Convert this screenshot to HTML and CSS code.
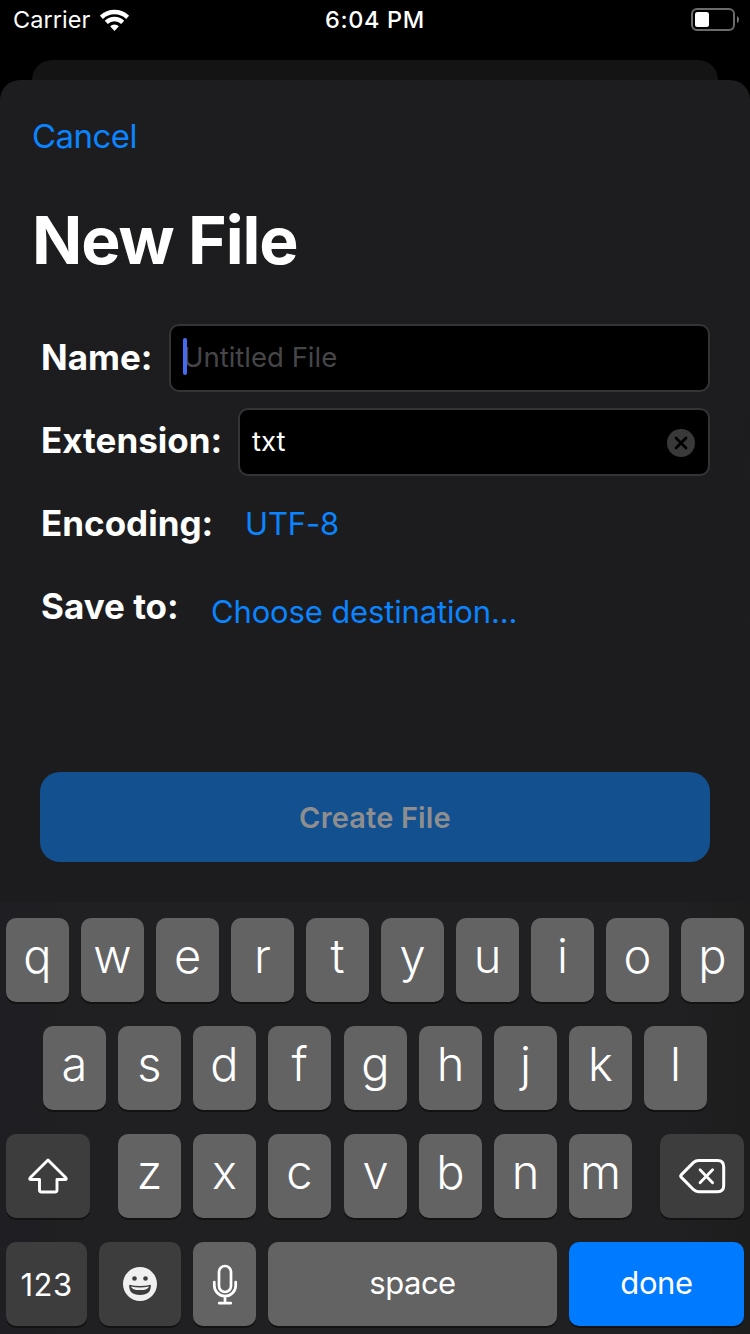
FILE: index.html
```html
<!DOCTYPE html>
<html lang="en">
<head>
<meta charset="utf-8">
<title>New File</title>
<link rel="stylesheet" href="styles.css">
</head>
<body>
<header class="status">
  <div class="status-left">
    <span class="carrier">Carrier</span>
    <svg class="wifi" width="30" height="22" viewBox="0 0 30 22">
      <g fill="none" stroke="#fff" stroke-width="4.400">
        <path d="M1.400 8.300a19 19 0 0 1 26.200 0"/>
        <path d="M6.300 13.300a11.900 11.900 0 0 1 16.400 0"/>
      </g>
      <path d="M10.100 17.300a6.300 6.300 0 0 1 8.800 0L14.500 22z" fill="#fff"/>
    </svg>
  </div>
  <span class="time">6:04 PM</span>
  <div class="status-right">
    <svg width="50" height="24" viewBox="0 0 50 24">
      <rect x="2" y="2" width="42" height="21" rx="5" fill="none" stroke="#6b6b6b" stroke-width="2"/>
      <rect x="5" y="5" width="14" height="15" rx="2.500" fill="#fff"/>
      <path d="M47 9q2 1 2 3.500t-2 3.500z" fill="#7a7a7a"/>
    </svg>
  </div>
</header>
<div class="sheet-behind"></div>
<main class="sheet">
  <a class="cancel">Cancel</a>
  <h1 class="title">New File</h1>
  <form class="form">
    <div class="row row-name">
      <label class="label name">Name:</label>
      <div class="field"><span class="caret"></span><span class="placeholder">Untitled File</span></div>
    </div>
    <div class="row row-ext">
      <label class="label ext">Extension:</label>
      <div class="field">
        <span class="value">txt</span>
        <svg class="clear" width="28" height="28" viewBox="0 0 28 28">
          <circle cx="14" cy="14" r="14" fill="#39393a"/>
          <path d="M9 9l10 10M19 9l-10 10" stroke="#000" stroke-width="2.800" stroke-linecap="round"/>
        </svg>
      </div>
    </div>
    <div class="row row-link">
      <label class="label enc">Encoding:</label>
      <a class="link utf">UTF-8</a>
    </div>
    <div class="row row-link row-save">
      <label class="label save">Save to:</label>
      <a class="link dest">Choose destination...</a>
    </div>
  </form>
  <div class="create">Create File</div>
</main>
<section class="keyboard">
  <div class="keys">
    <span class="key">q</span><span class="key">w</span><span class="key">e</span><span class="key">r</span><span class="key">t</span><span class="key">y</span><span class="key">u</span><span class="key">i</span><span class="key">o</span><span class="key">p</span>
  </div>
  <div class="keys keys-home">
    <span class="key">a</span><span class="key">s</span><span class="key">d</span><span class="key">f</span><span class="key nudge">g</span><span class="key">h</span><span class="key">j</span><span class="key">k</span><span class="key">l</span>
  </div>
  <div class="keys">
    <span class="key dark shift">
      <svg width="40" height="36" viewBox="0 0 40 36" fill="none" stroke="#fff" stroke-width="2.900" stroke-linejoin="round">
        <path d="M20 2 2.200 19.800q-1.200 1.700.8 1.700H11.500V32q0 2 2 2H27q2 0 2-2V21.500H37q2 0 .8-1.700z"/>
      </svg>
    </span>
    <span class="key">z</span><span class="key">x</span><span class="key">c</span><span class="key nudge">v</span><span class="key">b</span><span class="key">n</span><span class="key">m</span>
    <span class="key dark delete">
      <svg width="48" height="36" viewBox="0 0 48 36" fill="none" stroke="#fff" stroke-width="3" stroke-linecap="round" stroke-linejoin="round">
        <path d="M3.200 16.900 15.600 4.400Q17.800 2.400 20.500 2.400H39.500Q45.700 2.400 45.700 8.700V27.500Q45.700 33.700 39.500 33.700H20.500Q17.800 33.700 15.600 31.700L3.200 19.100Q2.200 18 3.200 16.900z"/>
        <path d="M22 11.700 34.600 24.700M34.600 11.700 22 24.700" stroke-width="2.800"/>
      </svg>
    </span>
  </div>
  <div class="keys">
    <span class="key dark numbers">123</span>
    <span class="key dark emoji">
      <svg width="34" height="34" viewBox="0 0 34 34">
        <circle cx="17" cy="17" r="17" fill="#f0f0f0"/>
        <g fill="#3d3d3d">
          <circle cx="11.500" cy="11.500" r="2.300"/>
          <circle cx="22.500" cy="11.500" r="2.300"/>
          <path d="M6.200 17.800Q17 20.200 27.800 17.800Q28.500 28 17 28Q5.500 28 6.200 17.800z"/>
        </g>
        <path d="M8 19.400Q17 21.400 26 19.400Q25.200 23.100 17 23.100Q8.800 23.100 8 19.400z" fill="#f0f0f0"/>
      </svg>
    </span>
    <span class="key mic">
      <svg width="26" height="42" viewBox="0 0 26 42" fill="none" stroke="#fff" stroke-width="2.700" stroke-linecap="round">
        <rect x="7" y="3" width="12" height="26" rx="6"/>
        <path d="M2.300 19V22.500a10.700 10.700 0 0 0 21.400 0V19M13 33.200V40M7.200 40.200H18.800"/>
      </svg>
    </span>
    <span class="key space">space</span>
    <span class="key done">done</span>
  </div>
</section>
</body>
</html>
```
FILE: styles.css
```css
* { box-sizing: border-box; }
body {
  margin: 0;
  width: 750px;
  height: 1334px;
  overflow: hidden;
  background: #000;
  color: #fff;
  font-family: Inter, "Liberation Sans", sans-serif;
  display: flex;
  flex-direction: column;
  white-space: nowrap;
}
.status {
  height: 60px;
  flex: none;
  display: grid;
  grid-template-columns: 1fr auto 1fr;
  line-height: 40px;
  font-size: 23.500px;
}
.status-left { display: flex; padding-left: 13px; gap: 10px; }
.carrier { letter-spacing: .05px; }
.wifi { margin-top: 9px; }
.time { font-weight: 500; letter-spacing: .65px; }
.status-right { display: flex; justify-content: flex-end; padding: 7px 10px 0 0; }
.sheet-behind {
  flex: none;
  height: 20px;
  margin: 0 32px;
  border-radius: 20px 20px 0 0;
  background: #141414;
}
.sheet {
  flex: none;
  height: 822px;
  padding: 36px 40px 0;
  background: linear-gradient(#1d1d1f, #1c1c1e);
  border-radius: 20px 20px 0 0;
  display: flex;
  flex-direction: column;
}
.cancel {
  margin-left: -8px;
  font-size: 33px;
  letter-spacing: -.55px;
  line-height: 40px;
  color: #0a84ff;
}
.title {
  margin: 44px 0 0 -8px;
  font-size: 66px;
  letter-spacing: -1.100px;
  line-height: 80px;
  font-weight: 700;
}
.form { margin-top: 44px; height: 448px; }
.row { display: flex; align-items: center; height: 68px; }
.row-name .label { margin-top: -2px; }
.row-ext { margin-top: 16px; }
.row-ext .label { margin-top: -4px; }
.row-link { margin-top: 13px; }
.row-save { margin-top: 15px; }
.row-save .label { margin-top: -1px; }
.label { flex: none; font-size: 35px; font-weight: 700; padding-left: 1px; }
.name { width: 129px; }
.ext { width: 198px; }
.enc { width: 205px; }
.save { width: 171px; }
.field {
  flex: 1;
  height: 68px;
  border: 2px solid #343436;
  border-radius: 10px;
  background: #000;
  display: flex;
  align-items: center;
  padding: 0 13px 0 12px;
  font-size: 27.500px;
}
.caret { width: 4px; height: 37px; border-radius: 2px; background: #456af2; margin: -3px -4px 0 0; z-index: 1; }
.placeholder { color: #464648; margin-top: -2px; }
.value { margin: -2px 0 0; }
.clear { margin: 2px 0 0 auto; }
.link { font-size: 31px; letter-spacing: -.15px; color: #0a84ff; }
.dest { margin-top: 11px; }
.create {
  height: 90px;
  border-radius: 20px;
  background: #13508f;
  color: #8e8e8f;
  text-align: center;
  font-size: 29px;
  letter-spacing: .15px;
  font-weight: 600;
  line-height: 92px;
}
.keyboard {
  flex: 1;
  padding: 16px 6px 0;
  background: linear-gradient(90deg, #1e1e23, #202022 10%, #202022 90%, #1d1d1e);
  display: flex;
  flex-direction: column;
  gap: 24px;
}
.keys { display: flex; gap: 12px; height: 84px; }
.keys-home { padding-left: 37px; }
.key {
  flex: none;
  width: 63px;
  height: 84px;
  border-radius: 10px;
  background: #636364;
  box-shadow: 0 2px 0 #121213;
  text-align: center;
  font-size: 47px;
  font-weight: 340;
  line-height: 76px;
}
.nudge { margin-left: 1px; }
.dark { background: #3d3d3d; }
.shift { width: 84px; margin-right: 16px; padding-top: 24px; line-height: 0; }
.delete { width: 84px; margin-left: 16px; padding-top: 24px; line-height: 0; }
.numbers { width: 81px; font-size: 31px; font-weight: 400; letter-spacing: .4px; line-height: 86px; }
.emoji { width: 82px; padding-top: 25px; line-height: 0; }
.mic { padding-top: 21px; line-height: 0; }
.space { width: 289px; font-size: 31px; font-weight: 400; letter-spacing: -.5px; line-height: 82px; }
.done { width: 175px; background: #007aff; font-size: 31px; font-weight: 400; letter-spacing: -.4px; line-height: 82px; }
```
